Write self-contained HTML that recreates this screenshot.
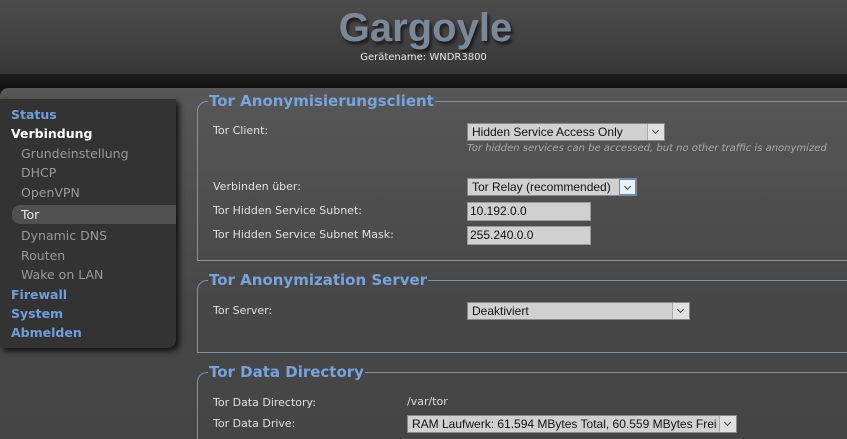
<!DOCTYPE html>
<html style="overflow:hidden;height:439px"><head><meta charset="utf-8"><style>
*{box-sizing:border-box}
body{margin:0;width:847px;height:439px;overflow:hidden;position:relative;background:#141414;font-family:"DejaVu Sans","Liberation Sans",sans-serif;}
#hdr{position:absolute;left:0;top:0;width:847px;height:74px;background:linear-gradient(#4c4c4c,#383838);text-align:center}
#hdr h1{margin:0;position:absolute;top:6px;left:2px;width:100%;font-family:"Liberation Sans",sans-serif;font-weight:bold;font-size:40px;color:#7a8898;text-shadow:2px 3px 3px #1a1a1a}
#hdr .dn{position:absolute;top:52px;width:100%;font-size:10px;color:#e8e8e8}
#band{position:absolute;top:74px;left:0;width:847px;height:16px;background:linear-gradient(#1e1e1e,#111)}
#main{position:absolute;top:88px;left:0;width:847px;height:351px;background:linear-gradient(#575757,#474747 60%,#454545);border-top-left-radius:8px;overflow:hidden}
#nav{position:absolute;left:0;top:99px;width:176px;height:249px;background:#333;border-radius:0 0 8px 0;box-shadow:3px 3px 6px #111;font-size:12.5px}
#nav div{position:absolute;left:11px}
.top{font-weight:bold;color:#6f9fd8}
.sub{color:#9a9a9a;left:21px!important}
.sel{position:absolute;left:12px!important;width:164px;height:19px;background:#505050;border-radius:8px 0 0 8px;color:#e8e8e8;padding-left:9px;line-height:19px}
fieldset{position:absolute;left:197px;width:700px;border:1px solid #7f93a8;border-radius:10px 0 0 0;margin:0;padding:0}
legend{font-weight:bold;font-size:15px;color:#76a4dc;padding:0 1px;margin-left:10px;line-height:16px}
.l{position:absolute;left:213px;font-size:11px;color:#e0e0e0}
.sel2{position:absolute;height:18px;background:#d0d0d0;border:1px solid #888;font-family:"Liberation Sans",sans-serif;font-size:12px;color:#111;padding-left:4px;line-height:16px}
.sel2 .a{position:absolute;right:0;top:0;width:17px;height:16px;border-left:1px solid #aaa;background:#e0e0e0}
.sel2 .a:after{content:"";position:absolute;left:5px;top:4px;width:4px;height:4px;border-right:1px solid #444;border-bottom:1px solid #444;transform:rotate(45deg)}
.inp{position:absolute;left:467px;width:124px;height:19px;background:#d0d0d0;border:1px solid #999;font-family:"Liberation Sans",sans-serif;font-size:12px;color:#111;padding-left:2px;line-height:17px}
</style></head><body>
<div id="hdr"><h1>Gargoyle</h1><div class="dn">Gerätename: WNDR3800</div></div>
<div id="band"></div>
<div id="main"></div>
<div id="nav">
<div class="top" style="top:8px">Status</div>
<div class="top" style="top:27px;color:#fff">Verbindung</div>
<div class="sub" style="top:47px">Grundeinstellung</div>
<div class="sub" style="top:66px">DHCP</div>
<div class="sub" style="top:86px">OpenVPN</div>
<div class="sel" style="top:106px">Tor</div>
<div class="sub" style="top:129px">Dynamic DNS</div>
<div class="sub" style="top:149px">Routen</div>
<div class="sub" style="top:168px">Wake on LAN</div>
<div class="top" style="top:188px">Firewall</div>
<div class="top" style="top:207px">System</div>
<div class="top" style="top:226px">Abmelden</div>
</div>
<fieldset style="top:93px;height:168px"><legend>Tor Anonymisierungsclient</legend></fieldset>
<fieldset style="top:272px;height:81px"><legend>Tor Anonymization Server</legend></fieldset>
<fieldset style="top:364px;height:75px;border-bottom:none"><legend>Tor Data Directory</legend></fieldset>
<div class="l" style="top:124px">Tor Client:</div>
<div class="sel2" style="left:467px;top:123px;width:198px">Hidden Service Access Only<span class="a"></span></div>
<div style="position:absolute;left:467px;top:143px;font-size:10px;font-style:italic;color:#aaa">Tor hidden services can be accessed, but no other traffic is anonymized</div>
<div class="l" style="top:180px">Verbinden über:</div>
<div class="sel2" style="left:467px;top:178px;width:170px">Tor Relay (recommended)<span class="a" style="border:1px solid #5a8ad0;background:#e8f2fc"></span></div>
<div class="l" style="top:204px">Tor Hidden Service Subnet:</div>
<div class="inp" style="top:202px">10.192.0.0</div>
<div class="l" style="top:228px">Tor Hidden Service Subnet Mask:</div>
<div class="inp" style="top:226px">255.240.0.0</div>
<div class="l" style="top:304px">Tor Server:</div>
<div class="sel2" style="left:467px;top:302px;width:223px">Deaktiviert<span class="a"></span></div>
<div class="l" style="top:396px">Tor Data Directory:</div>
<div style="position:absolute;left:407px;top:395px;font-size:11px;color:#ddd">/var/tor</div>
<div class="l" style="top:417px">Tor Data Drive:</div>
<div class="sel2" style="left:407px;top:415px;width:330px">RAM Laufwerk: 61.594 MBytes Total, 60.559 MBytes Frei<span class="a"></span></div>
</body></html>
